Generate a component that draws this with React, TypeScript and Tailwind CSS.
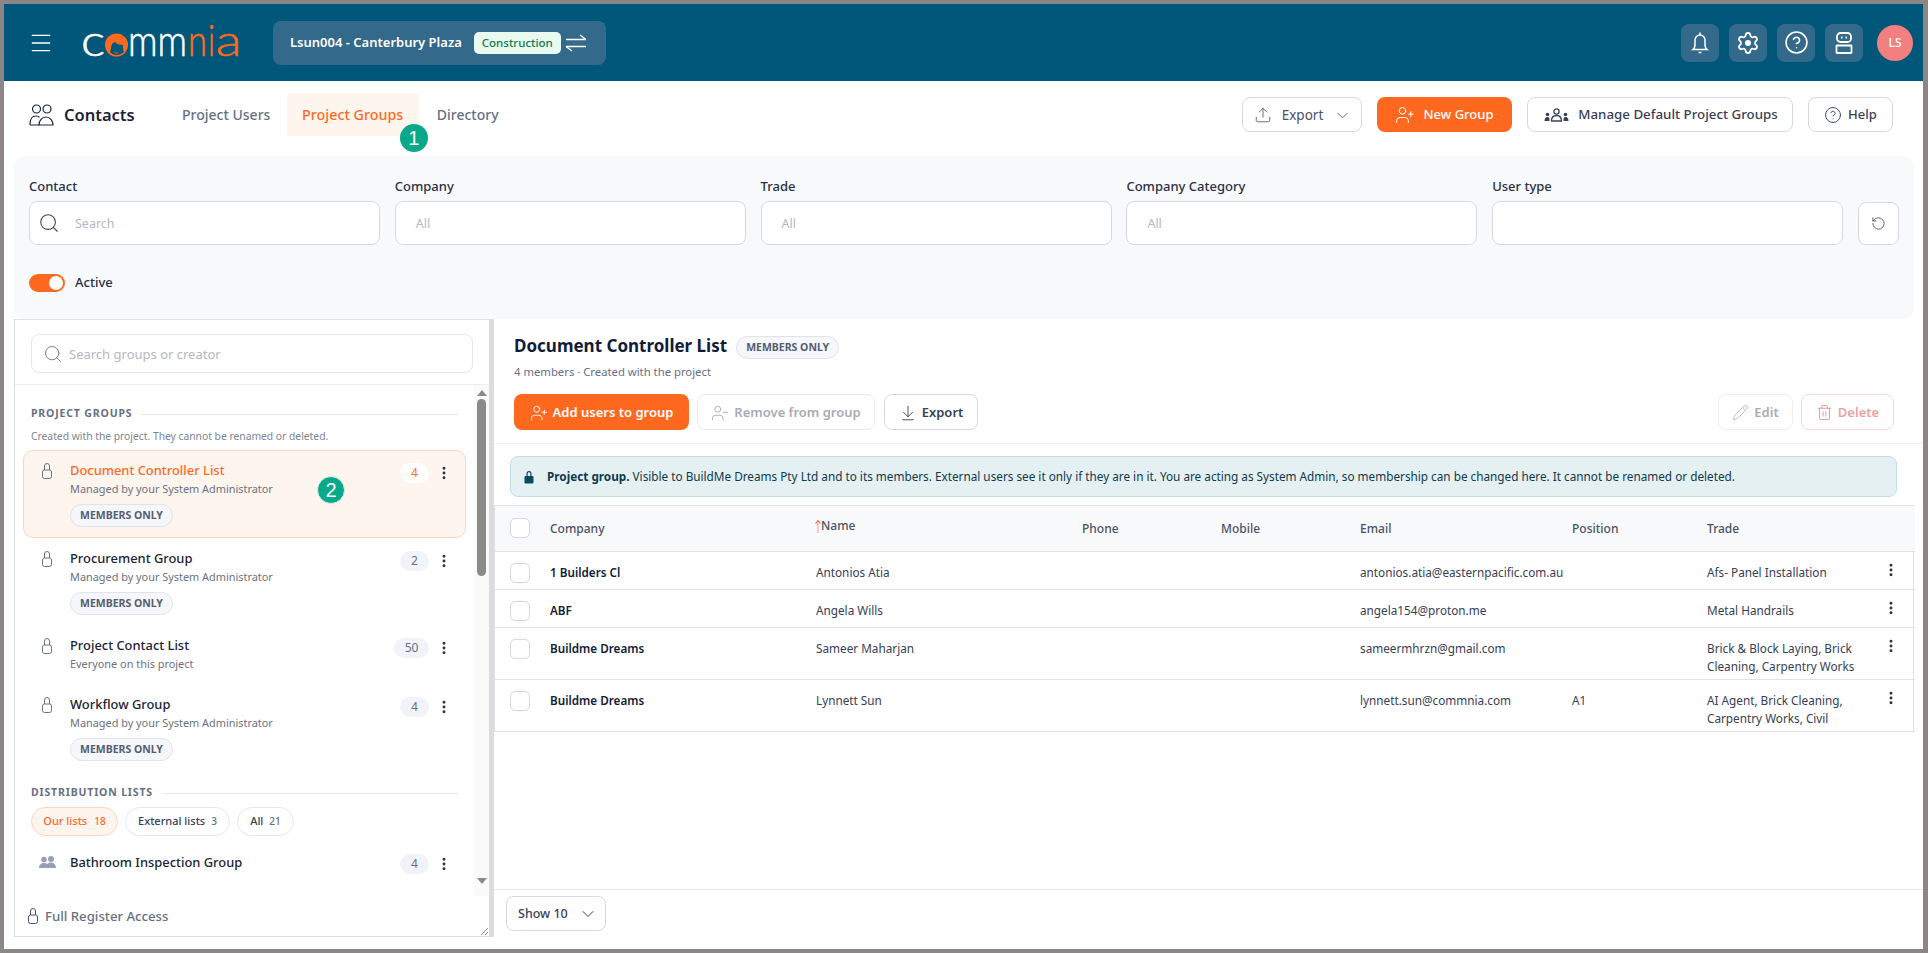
import { ArrowDownToLine, ChevronDown, EllipsisVertical, Menu, Pencil, RotateCw, Search, Trash2, Upload, UserPlus, UserMinus, CircleHelp } from 'lucide-react';

const font = { fontFamily: '"Noto Sans", "Open Sans", sans-serif' };

function Logo() {
  return (
    <svg width="162" height="34" viewBox="0 0 162 34" className="ml-[28px] shrink-0 overflow-visible">
      <g style={{ fontFamily: 'Lato, sans-serif', fontWeight: 300 }} fontSize="44" strokeWidth="0.6">
        <text x="-1" y="30" fill="#fff" stroke="#fff" textLength="24" lengthAdjust="spacingAndGlyphs">c</text>
        <text x="46" y="30" fill="#fff" stroke="#fff" textLength="59" lengthAdjust="spacingAndGlyphs">mm</text>
        <text x="106" y="30" fill="#ff6a1f" stroke="#ff6a1f" textLength="19" lengthAdjust="spacingAndGlyphs">n</text>
        <text x="126" y="30" fill="#ff6a1f" stroke="#ff6a1f" textLength="7" lengthAdjust="spacingAndGlyphs">i</text>
        <text x="134" y="30" fill="#ff6a1f" stroke="#ff6a1f" textLength="26" lengthAdjust="spacingAndGlyphs">a</text>
      </g>
      <circle cx="34.5" cy="19" r="11.5" fill="#ff6a1f" />
      <path d="M28 26c1-3 1-6 2-8 1-1 2-2 3-2 1 2 4 3 8 3 0 3 0 5 1 7-2 2-5 3-7.500 3s-5-1-6.500-3z" fill="#00577a" />
      <path d="M32.500 26.500c1.300.8 2.700.8 4 0" stroke="#ff6a1f" strokeWidth="0.9" fill="none" />
    </svg>
  );
}

function HeadBtn({ children }: { children: React.ReactNode }) {
  return <div className="flex h-[38px] w-[38px] items-center justify-center rounded-lg bg-[#33698a] text-white">{children}</div>;
}

function LockIcon({ className }: { className?: string }) {
  return (
    <svg width="10" height="16" viewBox="0 0 10 16" fill="none" stroke="currentColor" strokeWidth="1" className={className}>
      <path d="M2.500 7V3a2.500 2.500 0 0 1 5 0v4" />
      <rect x="0.500" y="7" width="9" height="8.500" rx="2" />
    </svg>
  );
}

function MembersBadge() {
  return (
    <span className="inline-flex h-[23px] items-center rounded-full border border-[#dfe3ea] bg-[#f6f7fa] px-[9px] text-[10.500px] font-bold text-[#555d72]">
      MEMBERS ONLY
    </span>
  );
}

function StepDot({ n, className }: { n: number; className: string }) {
  return (
    <span
      className={`absolute flex h-[28px] w-[28px] items-center justify-center rounded-full bg-[#0aa88a] text-[20px] leading-none text-white ${className}`}
      style={{ fontFamily: '"Liberation Sans", sans-serif' }}
    >
      {n}
    </span>
  );
}

function Filter({ label, placeholder, search }: { label: string; placeholder?: string; search?: boolean }) {
  return (
    <div className="w-[351px] shrink-0">
      <div className="mb-[5px] h-[20px] text-[13px] font-medium leading-[20px] text-[#283046]">{label}</div>
      <div className="flex h-[44px] items-center rounded-lg border border-[#d4d8e0] bg-white">
        {search ? <Search size={22} strokeWidth={1.2} className="ml-[8px] mr-[15px] text-[#3f4657]" /> : <span className="w-[20px]" />}
        <span className="pt-[3px] text-[12.500px] text-[#b4b8c0]">{placeholder}</span>
      </div>
    </div>
  );
}

type Group = { name: string; sub: string; count: number; badge?: boolean; active?: boolean; wide?: boolean };

const groups: Group[] = [
  { name: 'Document Controller List', sub: 'Managed by your System Administrator', count: 4, badge: true, active: true },
  { name: 'Procurement Group', sub: 'Managed by your System Administrator', count: 2, badge: true },
  { name: 'Project Contact List', sub: 'Everyone on this project', count: 50, wide: true },
  { name: 'Workflow Group', sub: 'Managed by your System Administrator', count: 4, badge: true },
];

function GroupRow({ g }: { g: Group }) {
  return (
    <div
      className={`relative mx-[8px] flex rounded-[10px] border pl-[18px] pr-[13px] ${
        g.active ? 'border-[#fdd5bd] bg-[#fff5ef]' : 'border-transparent'
      } ${g.badge ? 'h-[88px] pt-[9px]' : 'h-[58px] pt-[8px]'}`}
    >
      <LockIcon className="mt-[3px] shrink-0 text-[#6b7280]" />
      <div className="ml-[18px] min-w-0">
        <div className={`h-[20px] text-[12.900px] font-medium leading-[20px] ${g.active ? 'text-[#ff6a1f]' : 'text-[#1b2336]'}`}>{g.name}</div>
        <div className="h-[18px] text-[10.900px] leading-[18px] text-[#6b7280]">{g.sub}</div>
        {g.badge && (
          <div className="mt-[6px] flex">
            <MembersBadge />
          </div>
        )}
      </div>
      <div className="ml-auto mt-[3px] flex h-[20px] items-center gap-[7px]">
        <span
          className={`flex h-[20px] items-center justify-center rounded-full text-[12px] ${g.wide ? 'w-[35px]' : 'w-[29px]'} ${
            g.active ? 'bg-white text-[#ff6a1f]' : 'bg-[#f1f3f8] text-[#667085]'
          }`}
        >
          {g.count}
        </span>
        <EllipsisVertical size={16} strokeWidth={2.4} className="text-[#2b3244]" />
      </div>
      {g.active && <StepDot n={2} className="left-[293px] top-[25px] border border-[#d8f3ec]" />}
    </div>
  );
}

type Row = { company: string; name: string; email: string; position?: string; trade: string[]; tall?: boolean };

const rows: Row[] = [
  { company: '1 Builders Cl', name: 'Antonios Atia', email: 'antonios.atia@easternpacific.com.au', trade: ['Afs- Panel Installation'] },
  { company: 'ABF', name: 'Angela Wills', email: 'angela154@proton.me', trade: ['Metal Handrails'] },
  { company: 'Buildme Dreams', name: 'Sameer Maharjan', email: 'sameermhrzn@gmail.com', trade: ['Brick & Block Laying, Brick', 'Cleaning, Carpentry Works'], tall: true },
  { company: 'Buildme Dreams', name: 'Lynnett Sun', email: 'lynnett.sun@commnia.com', position: 'A1', trade: ['AI Agent, Brick Cleaning,', 'Carpentry Works, Civil'], tall: true },
];

function Checkbox() {
  return <div className="h-[20px] w-[20px] rounded-[5px] border border-[#d4d8e0] bg-white" />;
}

export default function App() {
  return (
    <div className="h-[953px] w-full bg-[#8c8686] pb-[4px] pl-[4px] pr-[5px] pt-[4px]" style={font}>
      <div className="flex h-full flex-col bg-white">
        {/* Top bar */}
        <header className="flex h-[77px] shrink-0 items-center bg-[#00577a]">
          <Menu size={26} strokeWidth={1.25} className="ml-[24px] text-white" />
          <Logo />
          <div className="ml-[29px] flex h-[44px] w-[333px] items-center rounded-lg bg-[#33698a] pl-[17px]">
            <span className="text-[13px] font-semibold text-white">Lsun004 - Canterbury Plaza</span>
            <span className="ml-[12px] flex h-[22px] w-[87px] items-center justify-center rounded-[5px] bg-[#e9fbf1] text-[11.500px] font-medium text-[#0b7a4b]">
              Construction
            </span>
            <svg width="22" height="18" viewBox="0 0 22 18" fill="none" stroke="#fff" strokeWidth="1.4" className="ml-[4px]">
              <path d="M1 5.500h20M15 1l6 4.500M21 12.500H1M7 17l-6-4.500" />
            </svg>
          </div>
          <div className="ml-auto mr-[10px] flex items-center gap-[10px]">
            <HeadBtn>
              <svg width="18" height="24" viewBox="0 0 18 24" fill="none" stroke="#fff" strokeWidth="1.5">
                <path d="M2 18.500c1.500-1 2-2.500 2-5.500V9a5 5 0 0 1 10 0v4c0 3 .5 4.500 2 5.500zM9 1.500V4M7.500 21.500h3" />
              </svg>
            </HeadBtn>
            <HeadBtn>
              <svg width="24" height="24" viewBox="0 0 24 24" fill="none" stroke="#fff" strokeWidth="1.8">
                <path d="M9.671 4.136a2.34 2.34 0 0 1 4.659 0 2.34 2.34 0 0 0 3.319 1.915 2.34 2.34 0 0 1 2.33 4.033 2.34 2.34 0 0 0 0 3.831 2.34 2.34 0 0 1-2.33 4.033 2.34 2.34 0 0 0-3.319 1.915 2.34 2.34 0 0 1-4.659 0 2.34 2.34 0 0 0-3.32-1.915 2.34 2.34 0 0 1-2.33-4.033 2.34 2.34 0 0 0 0-3.831A2.34 2.34 0 0 1 6.35 6.051a2.34 2.34 0 0 0 3.319-1.915" />
                <circle cx="12" cy="12" r="3" fill="#fff" stroke="none" />
              </svg>
            </HeadBtn>
            <HeadBtn>
              <CircleHelp size={25} strokeWidth={1.5} />
            </HeadBtn>
            <HeadBtn>
              <svg width="20" height="24" viewBox="0 0 20 24" fill="none" stroke="#fff" strokeWidth="1.8">
                <rect x="3" y="2" width="14" height="9" rx="3.500" />
                <rect x="2.500" y="14.500" width="15" height="7.500" rx="0.500" />
                <path d="M7 6.500h1.500M11.500 6.500H13" />
              </svg>
            </HeadBtn>
            <div className="ml-[4px] flex h-[36px] w-[36px] items-center justify-center rounded-full bg-[#f28080] text-[12px] font-medium text-white">LS</div>
          </div>
        </header>

        {/* Tabs row */}
        <div className="flex h-[75px] shrink-0 items-start">
          <div className="ml-[25px] mt-[22px] flex items-center">
            <svg width="25" height="24" viewBox="0 0 25 24" fill="none" stroke="#1b2336" strokeWidth="1.200">
              <circle cx="7.500" cy="6" r="4" />
              <circle cx="18" cy="6" r="4" />
              <path d="M1 22c0-7 2-9 6-9 1.500 0 3 .5 3.500 1.500M1 22h9" />
              <path d="M10 22c0-4.500 3-8 7-8s7 3.500 7 8z" />
            </svg>
            <span className="ml-[10px] text-[16.500px] font-semibold text-[#1b2336]">Contacts</span>
          </div>
          <div className="ml-[31px] mt-[12px] flex">
            <div className="flex h-[43px] w-[121px] items-center justify-center text-[14px] font-medium text-[#667085]">Project Users</div>
            <div className="relative flex h-[43px] w-[132px] items-center justify-center rounded-t-[3px] bg-[#fff5ef] text-[14.300px] font-medium text-[#ff6a1f]">
              Project Groups
              <StepDot n={1} className="left-[113px] top-[31px]" />
            </div>
            <div className="flex h-[43px] w-[98px] items-center justify-center text-[14px] font-medium text-[#667085]">Directory</div>
          </div>
          <div className="ml-auto mr-[30px] mt-[16px] flex items-center gap-[15px]">
            <div className="flex h-[35px] w-[120px] items-center justify-center gap-[10px] rounded-lg border border-[#d4d8e0] pl-[2px] pt-[1px] text-[13.500px] text-[#4b5264]">
              <Upload size={18} strokeWidth={1.1} />
              <span>Export</span>
              <ChevronDown size={19} strokeWidth={1.1} />
            </div>
            <div className="flex h-[35px] w-[135px] items-center justify-center gap-[8px] rounded-lg bg-[#ff691f] pt-[1px] text-[13px] font-medium text-white">
              <UserPlus size={20} strokeWidth={1.2} />
              New Group
            </div>
            <div className="flex h-[35px] w-[266px] items-center justify-center gap-[9px] rounded-lg border border-[#d4d8e0] pl-[2px] pt-[1px] text-[13.300px] font-medium text-[#374055]">
              <svg width="25" height="14" viewBox="0 0 25 14" fill="#374055">
                <circle cx="12.500" cy="3.500" r="2.600" fill="none" stroke="#374055" strokeWidth="1.300" />
                <path d="M7.500 13c0-3.500 2-5.500 5-5.500s5 2 5 5.500z" fill="none" stroke="#374055" strokeWidth="1.300" />
                <circle cx="3.500" cy="6.500" r="1.800" />
                <circle cx="21.500" cy="6.500" r="1.800" />
                <path d="M.5 13c0-2.500 1-4 3-4s2 1 2 4zM24.500 13c0-2.500-1-4-3-4s-2 1-2 4z" />
              </svg>
              Manage Default Project Groups
            </div>
            <div className="flex h-[35px] w-[85px] items-center justify-center gap-[6px] rounded-lg border border-[#d4d8e0] pt-[1px] text-[13px] font-medium text-[#374055]">
              <CircleHelp size={18} strokeWidth={1.2} />
              Help
            </div>
          </div>
        </div>

        {/* Filters */}
        <div className="ml-[10px] mr-[9px] h-[163px] shrink-0 rounded-t-xl rounded-b-xl bg-[#f8f9fb] pl-[15px] pt-[20px]">
          <div className="flex items-end gap-[14.800px]">
            <Filter label="Contact" placeholder="Search" search />
            <Filter label="Company" placeholder="All" />
            <Filter label="Trade" placeholder="All" />
            <Filter label="Company Category" placeholder="All" />
            <Filter label="User type" />
            <div className="flex h-[43px] w-[41px] items-center justify-center rounded-lg border border-[#d4d8e0] bg-white">
              <RotateCw size={15} strokeWidth={1.3} className="-scale-x-100 text-[#374055]" />
            </div>
          </div>
          <div className="mt-[28px] flex items-center">
            <div className="flex h-[18px] w-[36px] items-center justify-end rounded-full bg-[#ff691f] pr-[2px]">
              <span className="h-[14px] w-[14px] rounded-full bg-white" />
            </div>
            <span className="ml-[10px] text-[13px] font-medium text-[#283046]">Active</span>
          </div>
        </div>

        {/* Split view */}
        <div className="flex min-h-0 flex-1 pb-[12px] pl-[10px]">
          <aside className="flex w-[480px] shrink-0 flex-col border-y border-l border-[#dcdfe4] border-r-[5px] border-r-[#dcdcdc]">
            <div className="h-[65px] shrink-0 border-b border-[#eceef1] pl-[16px] pt-[14px]">
              <div className="flex h-[39px] w-[442px] items-center rounded-lg border border-[#e5e7eb] pl-[11px]">
                <Search size={20} strokeWidth={1.1} className="text-[#6b7280]" />
                <span className="ml-[6px] pt-[2px] text-[13px] text-[#b4b8c0]">Search groups or creator</span>
              </div>
            </div>
            <div className="flex min-h-0 flex-1">
              <div className="w-[459px] shrink-0 overflow-hidden">
                <div className="mx-[16px] mt-[21px] flex h-[16px] items-center">
                  <span className="whitespace-nowrap text-[10.500px] font-bold tracking-[0.08em] text-[#667085]">PROJECT GROUPS</span>
                  <span className="ml-[9px] h-px flex-1 bg-[#e5e7eb]" />
                </div>
                <div className="ml-[16px] mt-[6px] h-[16px] text-[10.300px] leading-[16px] text-[#7d8494]">
                  Created with the project. They cannot be renamed or deleted.
                </div>
                <div className="mt-[6px]">
                  {groups.map((g) => (
                    <GroupRow key={g.name} g={g} />
                  ))}
                </div>
                <div className="mx-[16px] mt-[13px] flex h-[16px] items-center">
                  <span className="whitespace-nowrap text-[10.500px] font-bold tracking-[0.08em] text-[#667085]">DISTRIBUTION LISTS</span>
                  <span className="ml-[9px] h-px flex-1 bg-[#e5e7eb]" />
                </div>
                <div className="ml-[16px] mt-[6px] flex gap-[7px] text-[11px] font-medium">
                  <span className="flex h-[29px] w-[87px] items-center justify-center gap-[7px] rounded-full border border-[#fdd5bd] bg-[#fff5ef] text-[#ff6a1f]">
                    Our lists <span className="text-[10px]">18</span>
                  </span>
                  <span className="flex h-[29px] w-[105px] items-center justify-center gap-[6px] rounded-full border border-[#e5e7eb] text-[#374055]">
                    External lists <span className="text-[10px] text-[#667085]">3</span>
                  </span>
                  <span className="flex h-[29px] w-[57px] items-center justify-center gap-[6px] rounded-full border border-[#e5e7eb] text-[#374055]">
                    All <span className="text-[10px] text-[#667085]">21</span>
                  </span>
                </div>
                <div className="mx-[8px] mt-[6px] flex border border-transparent pl-[15px] pr-[13px] pt-[9px]">
                  <svg width="17" height="13" viewBox="0 0 17 13" fill="#98a1b3" className="mt-[4px] shrink-0">
                    <circle cx="5" cy="3.500" r="2.800" />
                    <circle cx="12" cy="3" r="3" />
                    <path d="M0 12c0-3 2-5 5-5 1.500 0 2.500.5 3 1 .8-.8 2.500-1.500 4-1.500 3 0 5 2.500 5 5.500z" />
                  </svg>
                  <span className="ml-[14px] h-[20px] text-[12.900px] font-medium leading-[20px] text-[#1b2336]">Bathroom Inspection Group</span>
                  <div className="ml-auto mt-[2px] flex h-[20px] items-center gap-[7px]">
                    <span className="flex h-[20px] w-[29px] items-center justify-center rounded-full bg-[#f1f3f8] text-[12px] text-[#667085]">4</span>
                    <EllipsisVertical size={16} strokeWidth={2.4} className="text-[#2b3244]" />
                  </div>
                </div>
              </div>
              <div className="flex w-[15px] shrink-0 flex-col items-center bg-[#fafafa] pt-[5px]">
                <span className="h-0 w-0 border-x-[5px] border-b-[6px] border-x-transparent border-b-[#8a8a8a]" />
                <span className="mt-[3px] h-[177px] w-[9px] rounded-full bg-[#8a8a8a]" />
                <span className="mt-[302px] h-0 w-0 border-x-[5px] border-t-[6px] border-x-transparent border-t-[#8a8a8a]" />
              </div>
            </div>
            <div className="relative flex h-[40px] shrink-0 items-center pl-[13px]">
              <LockIcon className="text-[#4b5264]" />
              <span className="ml-[7px] pt-[1px] text-[13.200px] font-medium text-[#667085]">Full Register Access</span>
              <svg width="8" height="8" viewBox="0 0 8 8" className="absolute bottom-[1px] right-[1px]" stroke="#777" strokeWidth="0.8">
                <path d="M1 8l7-7M5 8l3-3" />
              </svg>
            </div>
          </aside>

          <main className="flex min-w-0 flex-1 flex-col">
            <div className="shrink-0 border-b border-[#eceef1] pb-[13px] pl-[20px] pr-[29px] pt-[15px]">
              <div className="flex h-[24px] items-center">
                <span className="text-[17px] font-bold text-[#111c37]">Document Controller List</span>
                <span className="ml-[9px]">
                  <MembersBadge />
                </span>
              </div>
              <div className="mt-[6px] h-[16px] text-[11.300px] leading-[16px] text-[#667085]">4 members · Created with the project</div>
              <div className="mt-[14px] flex h-[36px] items-stretch text-[13px] font-semibold">
                <div className="flex w-[175px] items-center justify-center gap-[5px] rounded-lg bg-[#ff691f] pt-[1px] text-white">
                  <UserPlus size={18} strokeWidth={1.2} />
                  Add users to group
                </div>
                <div className="ml-[8px] flex w-[178px] items-center justify-center gap-[5px] rounded-lg border border-[#e8eaee] pt-[1px] text-[#a6abb5]">
                  <UserMinus size={18} strokeWidth={1.2} />
                  Remove from group
                </div>
                <div className="ml-[9px] flex w-[94px] items-center justify-center gap-[5px] rounded-lg border border-[#d4d8e0] pt-[1px] text-[#374055]">
                  <ArrowDownToLine size={18} strokeWidth={1.2} />
                  Export
                </div>
                <div className="ml-auto flex w-[75px] items-center justify-center gap-[5px] rounded-lg border border-[#eceef1] pt-[1px] text-[#a6abb5]">
                  <Pencil size={17} strokeWidth={1.1} />
                  Edit
                </div>
                <div className="ml-[8px] flex w-[93px] items-center justify-center gap-[5px] rounded-lg border border-[#fdd3d3] pt-[1px] text-[#e8a3a3]">
                  <Trash2 size={17} strokeWidth={1.2} className="text-[#e08b8b]" />
                  Delete
                </div>
              </div>
            </div>

            <div className="ml-[16px] mr-[26px] mt-[12px] flex h-[41px] shrink-0 items-center rounded-lg border border-[#c3dde6] bg-[#e5f0f3] pl-[13px] text-[11.750px] text-[#0e3a4e]">
              <svg width="10" height="14" viewBox="0 0 10 14" fill="#0e4a60" className="mr-[13px] shrink-0">
                <path d="M2.500 6V3.500a2.500 2.500 0 0 1 5 0V6h1a1 1 0 0 1 1 1v5.500a1 1 0 0 1-1 1h-7a1 1 0 0 1-1-1V7a1 1 0 0 1 1-1zM3.700 6h2.600V3.500a1.300 1.300 0 0 0-2.600 0z" />
              </svg>
              <span className="font-bold">Project group.</span>
              <span className="ml-[3px]">
                Visible to BuildMe Dreams Pty Ltd and to its members. External users see it only if they are in it. You are acting as System Admin, so membership can be changed here. It cannot be renamed or deleted.
              </span>
            </div>

            <div className="mr-[9px] mt-[8px] shrink-0 border-x border-t border-[#dfe1e6]">
              <table className="w-full table-fixed border-collapse text-[12px]">
                <colgroup>
                  <col className="w-[55px]" />
                  <col className="w-[266px]" />
                  <col className="w-[266px]" />
                  <col className="w-[139px]" />
                  <col className="w-[139px]" />
                  <col className="w-[212px]" />
                  <col className="w-[135px]" />
                  <col className="w-[173px]" />
                  <col className="w-[35px]" />
                </colgroup>
                <thead>
                  <tr className="h-[45px] border-b border-[#dfe1e6] bg-[#f8f9fb] text-left text-[#4b5264]">
                    <th className="pl-[15px] font-normal">
                      <Checkbox />
                    </th>
                    <th className="pt-[1px] font-medium">Company</th>
                    <th className="pt-[1px] font-medium">
                      <span className="inline-flex -translate-y-[1px] items-center">
                        <svg width="6" height="14" viewBox="0 0 6 14" fill="none" className="-ml-[1px]">
                          <path d="M3 14V2" stroke="#f5a3a0" strokeWidth="1.100" />
                          <path d="M0.500 4.500 3 1.500l2.500 3" stroke="#f0603a" strokeWidth="1.100" />
                        </svg>
                        Name
                      </span>
                    </th>
                    <th className="pt-[1px] font-medium">Phone</th>
                    <th className="pt-[1px] font-medium">Mobile</th>
                    <th className="pt-[1px] font-medium">Email</th>
                    <th className="pt-[1px] font-medium">Position</th>
                    <th className="pt-[1px] font-medium">Trade</th>
                    <th />
                  </tr>
                </thead>
                <tbody>
                  {rows.map((r) => (
                    <tr key={r.email} className={`border-b border-[#dfe1e6] align-top text-[11.750px] leading-[18px] text-[#374055] ${r.tall ? 'h-[52px]' : 'h-[38px]'}`}>
                      <td className="pl-[15px] pt-[11px]">
                        <Checkbox />
                      </td>
                      <td className="pt-[11px] text-[11.700px] font-semibold text-[#111c37]">{r.company}</td>
                      <td className="pt-[11px]">{r.name}</td>
                      <td />
                      <td />
                      <td className="whitespace-nowrap pt-[11px]">{r.email}</td>
                      <td className="pt-[11px]">{r.position}</td>
                      <td className="pt-[11px]">
                        {r.trade.map((t) => (
                          <div key={t} className="whitespace-nowrap">{t}</div>
                        ))}
                      </td>
                      <td className="pt-[10px]">
                        <EllipsisVertical size={16} strokeWidth={2.4} className="ml-[3px] text-[#2b3244]" />
                      </td>
                    </tr>
                  ))}
                </tbody>
              </table>
            </div>

            <div className="mt-auto h-[48px] shrink-0 border-t border-[#e5e7eb] pl-[12px] pt-[6px]">
              <div className="flex h-[35px] w-[100px] items-center justify-between rounded-lg border border-[#d4d8e0] pl-[11px] pr-[7px] pt-[1px] text-[12.500px] font-medium text-[#374055]">
                Show 10
                <ChevronDown size={20} strokeWidth={1.2} />
              </div>
            </div>
          </main>
        </div>
      </div>
    </div>
  );
}
